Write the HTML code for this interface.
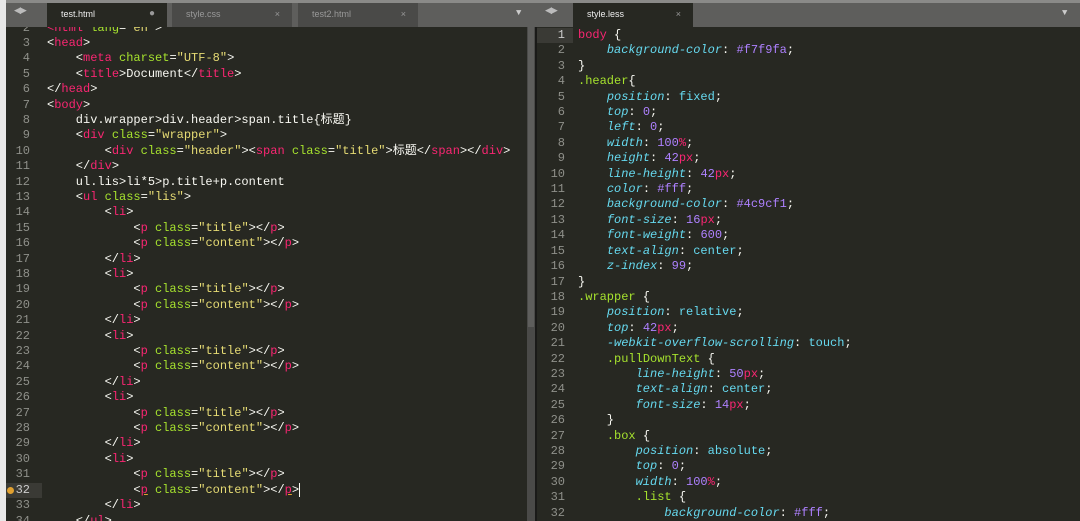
<!DOCTYPE html>
<html><head><meta charset="utf-8"><style>
*{margin:0;padding:0;box-sizing:border-box}
body{width:1080px;height:521px;overflow:hidden;background:#272822;font-family:"Liberation Mono","Noto Sans CJK SC",monospace;font-size:12px;position:relative}
.tabbar{position:absolute;top:0;height:27px;background:#5e5e5c;border-top:3px solid #8a8a88}
.tab{position:absolute;top:3px;height:24px;font-family:"Liberation Sans",sans-serif;font-size:9px;line-height:22px;padding-left:14px;color:#ddd}
.tab.in{background:#4a4a48;color:#999}
.tab.act{background:#272822;color:#eee}
.tab .x{position:absolute;right:12px;top:0;color:#999}
.pane{position:absolute;top:27px;bottom:0;overflow:hidden}
.code{position:absolute;left:0;right:0;white-space:normal;color:#f8f8f2;font-size:0}
.l{height:15.42px;line-height:15.42px;position:relative;white-space:pre;font-size:12px}
.n{position:absolute;text-align:right;color:#8f908a}
.t{color:#f92672}.a{color:#a6e22e}.s{color:#e6db74}.p{color:#66d9ef;font-style:italic}.v{color:#66d9ef}.num{color:#ae81ff}
.arrows{position:absolute;top:6px;color:#bbb;font-size:9px;font-family:"DejaVu Sans",sans-serif;letter-spacing:-1px}
</style></head><body>
<div style="position:absolute;left:0;top:0;width:6px;height:521px;background:#e8e8e8"></div>
<div class="tabbar" style="left:6px;width:529px"></div>
<div class="arrows" style="left:14px">◀▶</div>
<div class="tab act" style="left:47px;width:120px">test.html<span class="x" style="font-size:10px">●</span></div>
<div class="tab in" style="left:172px;width:120px">style.css<span class="x">×</span></div>
<div class="tab in" style="left:298px;width:120px">test2.html<span class="x">×</span></div>
<div style="position:absolute;left:516px;top:8px;color:#ccc;font-size:9px">▼</div>
<div class="tabbar" style="left:535px;width:545px"></div>
<div class="arrows" style="left:545px">◀▶</div>
<div class="tab act" style="left:573px;width:120px">style.less<span class="x">×</span></div>
<div style="position:absolute;left:1062px;top:8px;color:#ccc;font-size:9px">▼</div>

<div class="pane" style="left:6px;width:521px">
<div class="code" style="top:-6.5px">
<div class="l"><span class="n" style="left:0;width:24px">2</span><span style="position:absolute;left:41px"><span class="t">&lt;html</span> <span class="a">lang</span>=<span class="s">"en"</span>&gt;</span></div>
<div class="l"><span class="n" style="left:0;width:24px">3</span><span style="position:absolute;left:41px">&lt;<span class="t">head</span>&gt;</span></div>
<div class="l"><span class="n" style="left:0;width:24px">4</span><span style="position:absolute;left:41px">    &lt;<span class="t">meta</span> <span class="a">charset</span>=<span class="s">"UTF-8"</span>&gt;</span></div>
<div class="l"><span class="n" style="left:0;width:24px">5</span><span style="position:absolute;left:41px">    &lt;<span class="t">title</span>&gt;Document&lt;/<span class="t">title</span>&gt;</span></div>
<div class="l"><span class="n" style="left:0;width:24px">6</span><span style="position:absolute;left:41px">&lt;/<span class="t">head</span>&gt;</span></div>
<div class="l"><span class="n" style="left:0;width:24px">7</span><span style="position:absolute;left:41px">&lt;<span class="t">body</span>&gt;</span></div>
<div class="l"><span class="n" style="left:0;width:24px">8</span><span style="position:absolute;left:41px">    div.wrapper&gt;div.header&gt;span.title{标题}</span></div>
<div class="l"><span class="n" style="left:0;width:24px">9</span><span style="position:absolute;left:41px">    &lt;<span class="t">div</span> <span class="a">class</span>=<span class="s">"wrapper"</span>&gt;</span></div>
<div class="l"><span class="n" style="left:0;width:24px">10</span><span style="position:absolute;left:41px">        &lt;<span class="t">div</span> <span class="a">class</span>=<span class="s">"header"</span>&gt;&lt;<span class="t">span</span> <span class="a">class</span>=<span class="s">"title"</span>&gt;标题&lt;/<span class="t">span</span>&gt;&lt;/<span class="t">div</span>&gt;</span></div>
<div class="l"><span class="n" style="left:0;width:24px">11</span><span style="position:absolute;left:41px">    &lt;/<span class="t">div</span>&gt;</span></div>
<div class="l"><span class="n" style="left:0;width:24px">12</span><span style="position:absolute;left:41px">    ul.lis&gt;li*5&gt;p.title+p.content</span></div>
<div class="l"><span class="n" style="left:0;width:24px">13</span><span style="position:absolute;left:41px">    &lt;<span class="t">ul</span> <span class="a">class</span>=<span class="s">"lis"</span>&gt;</span></div>
<div class="l"><span class="n" style="left:0;width:24px">14</span><span style="position:absolute;left:41px">        &lt;<span class="t">li</span>&gt;</span></div>
<div class="l"><span class="n" style="left:0;width:24px">15</span><span style="position:absolute;left:41px">            &lt;<span class="t">p</span> <span class="a">class</span>=<span class="s">"title"</span>&gt;&lt;/<span class="t">p</span>&gt;</span></div>
<div class="l"><span class="n" style="left:0;width:24px">16</span><span style="position:absolute;left:41px">            &lt;<span class="t">p</span> <span class="a">class</span>=<span class="s">"content"</span>&gt;&lt;/<span class="t">p</span>&gt;</span></div>
<div class="l"><span class="n" style="left:0;width:24px">17</span><span style="position:absolute;left:41px">        &lt;/<span class="t">li</span>&gt;</span></div>
<div class="l"><span class="n" style="left:0;width:24px">18</span><span style="position:absolute;left:41px">        &lt;<span class="t">li</span>&gt;</span></div>
<div class="l"><span class="n" style="left:0;width:24px">19</span><span style="position:absolute;left:41px">            &lt;<span class="t">p</span> <span class="a">class</span>=<span class="s">"title"</span>&gt;&lt;/<span class="t">p</span>&gt;</span></div>
<div class="l"><span class="n" style="left:0;width:24px">20</span><span style="position:absolute;left:41px">            &lt;<span class="t">p</span> <span class="a">class</span>=<span class="s">"content"</span>&gt;&lt;/<span class="t">p</span>&gt;</span></div>
<div class="l"><span class="n" style="left:0;width:24px">21</span><span style="position:absolute;left:41px">        &lt;/<span class="t">li</span>&gt;</span></div>
<div class="l"><span class="n" style="left:0;width:24px">22</span><span style="position:absolute;left:41px">        &lt;<span class="t">li</span>&gt;</span></div>
<div class="l"><span class="n" style="left:0;width:24px">23</span><span style="position:absolute;left:41px">            &lt;<span class="t">p</span> <span class="a">class</span>=<span class="s">"title"</span>&gt;&lt;/<span class="t">p</span>&gt;</span></div>
<div class="l"><span class="n" style="left:0;width:24px">24</span><span style="position:absolute;left:41px">            &lt;<span class="t">p</span> <span class="a">class</span>=<span class="s">"content"</span>&gt;&lt;/<span class="t">p</span>&gt;</span></div>
<div class="l"><span class="n" style="left:0;width:24px">25</span><span style="position:absolute;left:41px">        &lt;/<span class="t">li</span>&gt;</span></div>
<div class="l"><span class="n" style="left:0;width:24px">26</span><span style="position:absolute;left:41px">        &lt;<span class="t">li</span>&gt;</span></div>
<div class="l"><span class="n" style="left:0;width:24px">27</span><span style="position:absolute;left:41px">            &lt;<span class="t">p</span> <span class="a">class</span>=<span class="s">"title"</span>&gt;&lt;/<span class="t">p</span>&gt;</span></div>
<div class="l"><span class="n" style="left:0;width:24px">28</span><span style="position:absolute;left:41px">            &lt;<span class="t">p</span> <span class="a">class</span>=<span class="s">"content"</span>&gt;&lt;/<span class="t">p</span>&gt;</span></div>
<div class="l"><span class="n" style="left:0;width:24px">29</span><span style="position:absolute;left:41px">        &lt;/<span class="t">li</span>&gt;</span></div>
<div class="l"><span class="n" style="left:0;width:24px">30</span><span style="position:absolute;left:41px">        &lt;<span class="t">li</span>&gt;</span></div>
<div class="l"><span class="n" style="left:0;width:24px">31</span><span style="position:absolute;left:41px">            &lt;<span class="t">p</span> <span class="a">class</span>=<span class="s">"title"</span>&gt;&lt;/<span class="t">p</span>&gt;</span></div>
<div class="l"><span style="position:absolute;left:0;width:36px;height:15px;background:#3a3a35"></span><span style="position:absolute;left:1px;top:4px;width:7px;height:7px;border-radius:50%;background:#e0a030"></span><span class="n" style="left:0;width:24px;color:#ccc">32</span><span style="position:absolute;left:41px">            &lt;<span class="t" style="text-decoration:underline #e0a030">p</span> <span class="a">class</span>=<span class="s">"content"</span>&gt;&lt;/<span class="t" style="text-decoration:underline #e0a030">p</span>&gt;<span style="border-left:1px solid #f8f8f0"></span></span></div>
<div class="l"><span class="n" style="left:0;width:24px">33</span><span style="position:absolute;left:41px">        &lt;/<span class="t">li</span>&gt;</span></div>
<div class="l"><span class="n" style="left:0;width:24px">34</span><span style="position:absolute;left:41px">    &lt;/<span class="t">ul</span>&gt;</span></div>
</div></div>
<div style="position:absolute;left:527px;top:27px;width:8px;height:494px;background:#4a4a48"></div>
<div style="position:absolute;left:528px;top:27px;width:6px;height:300px;background:#5e5e5c"></div>
<div style="position:absolute;left:535px;top:27px;width:2px;height:494px;background:#1a1a18"></div>

<div class="pane" style="left:537px;width:543px">
<div class="code" style="top:1px">
<div class="l"><span style="position:absolute;left:0;width:36px;height:15px;background:#3a3a35"></span><span class="n" style="left:0;width:28px;color:#ccc">1</span><span style="position:absolute;left:41px"><span class="t">body</span> {</span></div>
<div class="l"><span class="n" style="left:0;width:28px">2</span><span style="position:absolute;left:41px">    <span class="p">background-color</span>: <span class="num">#f7f9fa</span>;</span></div>
<div class="l"><span class="n" style="left:0;width:28px">3</span><span style="position:absolute;left:41px">}</span></div>
<div class="l"><span class="n" style="left:0;width:28px">4</span><span style="position:absolute;left:41px"><span class="a">.header</span>{</span></div>
<div class="l"><span class="n" style="left:0;width:28px">5</span><span style="position:absolute;left:41px">    <span class="p">position</span>: <span class="v">fixed</span>;</span></div>
<div class="l"><span class="n" style="left:0;width:28px">6</span><span style="position:absolute;left:41px">    <span class="p">top</span>: <span class="num">0</span>;</span></div>
<div class="l"><span class="n" style="left:0;width:28px">7</span><span style="position:absolute;left:41px">    <span class="p">left</span>: <span class="num">0</span>;</span></div>
<div class="l"><span class="n" style="left:0;width:28px">8</span><span style="position:absolute;left:41px">    <span class="p">width</span>: <span class="num">100</span><span class="t">%</span>;</span></div>
<div class="l"><span class="n" style="left:0;width:28px">9</span><span style="position:absolute;left:41px">    <span class="p">height</span>: <span class="num">42</span><span class="t">px</span>;</span></div>
<div class="l"><span class="n" style="left:0;width:28px">10</span><span style="position:absolute;left:41px">    <span class="p">line-height</span>: <span class="num">42</span><span class="t">px</span>;</span></div>
<div class="l"><span class="n" style="left:0;width:28px">11</span><span style="position:absolute;left:41px">    <span class="p">color</span>: <span class="num">#fff</span>;</span></div>
<div class="l"><span class="n" style="left:0;width:28px">12</span><span style="position:absolute;left:41px">    <span class="p">background-color</span>: <span class="num">#4c9cf1</span>;</span></div>
<div class="l"><span class="n" style="left:0;width:28px">13</span><span style="position:absolute;left:41px">    <span class="p">font-size</span>: <span class="num">16</span><span class="t">px</span>;</span></div>
<div class="l"><span class="n" style="left:0;width:28px">14</span><span style="position:absolute;left:41px">    <span class="p">font-weight</span>: <span class="num">600</span>;</span></div>
<div class="l"><span class="n" style="left:0;width:28px">15</span><span style="position:absolute;left:41px">    <span class="p">text-align</span>: <span class="v">center</span>;</span></div>
<div class="l"><span class="n" style="left:0;width:28px">16</span><span style="position:absolute;left:41px">    <span class="p">z-index</span>: <span class="num">99</span>;</span></div>
<div class="l"><span class="n" style="left:0;width:28px">17</span><span style="position:absolute;left:41px">}</span></div>
<div class="l"><span class="n" style="left:0;width:28px">18</span><span style="position:absolute;left:41px"><span class="a">.wrapper</span> {</span></div>
<div class="l"><span class="n" style="left:0;width:28px">19</span><span style="position:absolute;left:41px">    <span class="p">position</span>: <span class="v">relative</span>;</span></div>
<div class="l"><span class="n" style="left:0;width:28px">20</span><span style="position:absolute;left:41px">    <span class="p">top</span>: <span class="num">42</span><span class="t">px</span>;</span></div>
<div class="l"><span class="n" style="left:0;width:28px">21</span><span style="position:absolute;left:41px">    <span class="p">-webkit-overflow-scrolling</span>: <span class="v">touch</span>;</span></div>
<div class="l"><span class="n" style="left:0;width:28px">22</span><span style="position:absolute;left:41px">    <span class="a">.pullDownText</span> {</span></div>
<div class="l"><span class="n" style="left:0;width:28px">23</span><span style="position:absolute;left:41px">        <span class="p">line-height</span>: <span class="num">50</span><span class="t">px</span>;</span></div>
<div class="l"><span class="n" style="left:0;width:28px">24</span><span style="position:absolute;left:41px">        <span class="p">text-align</span>: <span class="v">center</span>;</span></div>
<div class="l"><span class="n" style="left:0;width:28px">25</span><span style="position:absolute;left:41px">        <span class="p">font-size</span>: <span class="num">14</span><span class="t">px</span>;</span></div>
<div class="l"><span class="n" style="left:0;width:28px">26</span><span style="position:absolute;left:41px">    }</span></div>
<div class="l"><span class="n" style="left:0;width:28px">27</span><span style="position:absolute;left:41px">    <span class="a">.box</span> {</span></div>
<div class="l"><span class="n" style="left:0;width:28px">28</span><span style="position:absolute;left:41px">        <span class="p">position</span>: <span class="v">absolute</span>;</span></div>
<div class="l"><span class="n" style="left:0;width:28px">29</span><span style="position:absolute;left:41px">        <span class="p">top</span>: <span class="num">0</span>;</span></div>
<div class="l"><span class="n" style="left:0;width:28px">30</span><span style="position:absolute;left:41px">        <span class="p">width</span>: <span class="num">100</span><span class="t">%</span>;</span></div>
<div class="l"><span class="n" style="left:0;width:28px">31</span><span style="position:absolute;left:41px">        <span class="a">.list</span> {</span></div>
<div class="l"><span class="n" style="left:0;width:28px">32</span><span style="position:absolute;left:41px">            <span class="p">background-color</span>: <span class="num">#fff</span>;</span></div>
</div></div>
</body></html>
